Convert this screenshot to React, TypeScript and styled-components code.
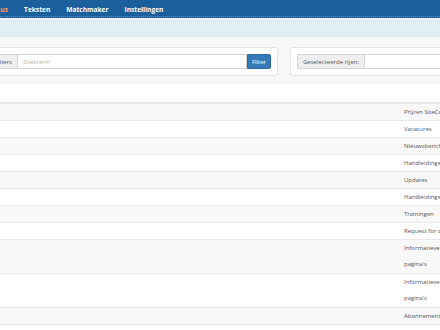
import styled, { createGlobalStyle } from "styled-components";

const GlobalStyle = createGlobalStyle`
  html, body {
    margin: 0;
    padding: 0;
    background: #ffffff;
    font-family: "Open Sans", "Liberation Sans", sans-serif;
    overflow: hidden;
  }
`;

const navItems = ["Menus", "Teksten", "Matchmaker", "Instellingen"];

const rows: string[][] = [
  ["Prijzen SiteCockpit"],
  ["Vacatures"],
  ["Nieuwsberichten"],
  ["Handleidingen CMS"],
  ["Updates"],
  ["Handleidingen Shop"],
  ["Trainingen"],
  ["Request for quotation"],
  ["Informatieve", "pagina's"],
  ["Informatieve", "pagina's"],
  ["Abonnementen"],
];

const App = () => {
  return (
    <Page>
      <GlobalStyle />
      <NavBar>
        <NavList>
          {navItems.map((item, i) => (
            <NavItem key={item} $active={i === 0}>
              {item}
            </NavItem>
          ))}
        </NavList>
      </NavBar>
      <SubBar />

      <Toolbar>
        <FilterPanel>
          <InputGroup>
            <Addon>Filters</Addon>
            <Input placeholder="Zoekterm" />
            <Button>Filter</Button>
          </InputGroup>
        </FilterPanel>
        <SelectPanel>
          <InputGroup>
            <Addon>Geselecteerde rijen:</Addon>
            <Input />
          </InputGroup>
        </SelectPanel>
      </Toolbar>

      <Spacer />

      <Table>
        {rows.map((lines, i) => (
          <Row key={i} $striped={i % 2 === 0}>
            <Cell />
            <TextCell>
              {lines.map((line, j) => (
                <Line key={j}>{line}</Line>
              ))}
            </TextCell>
          </Row>
        ))}
      </Table>
    </Page>
  );
};

export default App;

const Page = styled.div`
  width: 440px;
  height: 330px;
  overflow: hidden;
`;

const NavBar = styled.div`
  height: 16px;
  background-color: #1b5f9c;
  border-bottom: 1px dotted #5f8dba;
  box-shadow: 0 1px 0 #1b5f9c;
  display: flex;
  align-items: center;
`;

const NavList = styled.div`
  display: flex;
  align-items: center;
  margin-left: -22px;
  margin-top: 2px;
`;

const NavItem = styled.div<{ $active?: boolean }>`
  padding: 0 8px;
  font-size: 6.6px;
  font-weight: 700;
  color: ${(p) => (p.$active ? "#f3a23a" : "#ffffff")};
  white-space: nowrap;
`;

const SubBar = styled.div`
  margin-top: 1px;
  height: 17px;
  background-color: #e1eef4;
  border-top: 1px solid #f4f9fb;
  border-bottom: 1px solid #d9e6ec;
`;

const Toolbar = styled.div`
  display: flex;
  gap: 12px;
  padding: 10px 0 8px;
  background-color: #f7f7f7;
`;

const Panel = styled.div`
  background: #ffffff;
  border: 1px solid #e4e4e4;
  border-radius: 3px;
  padding: 6px;
  flex-shrink: 0;
`;

const FilterPanel = styled(Panel)`
  width: 282px;
  margin-left: -18px;
`;

const SelectPanel = styled(Panel)`
  width: 200px;
`;

const InputGroup = styled.div`
  display: flex;
  height: 15px;
`;

const Addon = styled.div`
  display: flex;
  align-items: center;
  padding: 0 5px;
  background: #eeeeee;
  border: 1px solid #d4d4d4;
  border-right: none;
  border-radius: 2px 0 0 2px;
  font-size: 6px;
  color: #555555;
  white-space: nowrap;
`;

const Input = styled.input`
  flex: 1;
  min-width: 0;
  height: 15px;
  box-sizing: border-box;
  border: 1px solid #d4d4d4;
  padding: 0 5px;
  font-family: "Open Sans", "Liberation Sans", sans-serif;
  font-size: 6px;
  color: #555555;
  outline: none;
  &::placeholder {
    color: #b0b0b0;
  }
`;

const Button = styled.button`
  width: 24px;
  height: 15px;
  padding: 0;
  border: 1px solid #2e6da4;
  border-radius: 0 2px 2px 0;
  background-color: #337ab7;
  color: #ffffff;
  font-family: "Open Sans", "Liberation Sans", sans-serif;
  font-size: 6px;
`;

const Spacer = styled.div`
  height: 18px;
  background: #ffffff;
`;

const Table = styled.div`
  border-top: 2px solid #e6e6e6;
`;

const Row = styled.div<{ $striped?: boolean }>`
  display: grid;
  grid-template-columns: 404px 80px;
  background-color: ${(p) => (p.$striped ? "#f8f8f8" : "#ffffff")};
  border-bottom: 1px solid #e8e8e8;
`;

const Cell = styled.div``;

const TextCell = styled.div`
  font-size: 6px;
  color: #555555;
  white-space: nowrap;
  overflow: hidden;
`;

const Line = styled.div`
  height: 16px;
  line-height: 16px;
  &:not(:first-child) {
    height: 17px;
    line-height: 17px;
  }
`;
